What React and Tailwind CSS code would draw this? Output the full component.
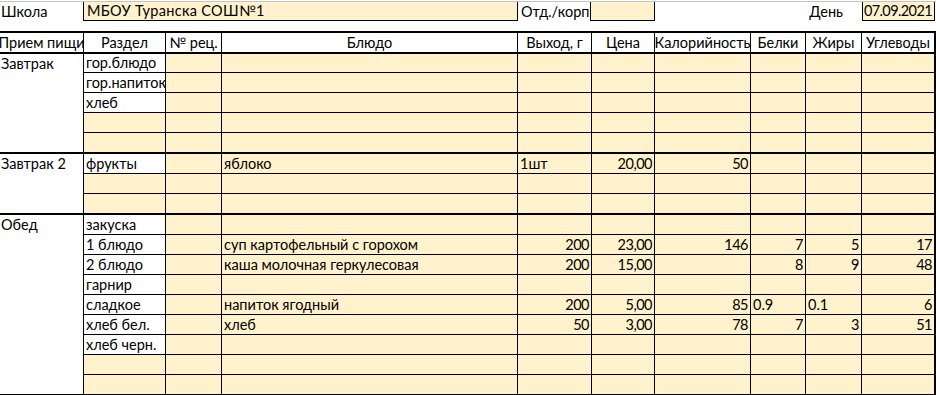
import React from "react";

const C = "bg-[#fff2cc]";
const W = "bg-white";

const colBase = [
  "border-r border-black",
  "border-r border-black",
  "border-r border-black",
  "border-r border-black",
  "border-r border-black",
  "border-r border-black",
  "border-r border-black",
  "border-r border-black",
  "border-r-2 border-black",
];

const groups = [
  {
    name: "Завтрак",
    rows: [
      { h: "h-[19px]", cells: [["гор.блюдо", "l", W]] },
      { h: "h-[20px]", cells: [["гор.напиток", "l", W]] },
      { h: "h-[20px]", cells: [["хлеб", "l", W]] },
      { h: "h-[20px]", cells: [] },
      { h: "h-[19px]", cells: [] },
    ],
  },
  {
    name: "Завтрак 2",
    rows: [
      {
        h: "h-[20px]",
        cells: [
          ["фрукты", "l", W],
          ["", "l"],
          ["яблоко", "l"],
          ["1шт", "l"],
          ["20,00", "r"],
          ["50", "r"],
        ],
      },
      { h: "h-[20px]", cells: [] },
      { h: "h-[19px]", cells: [] },
    ],
  },
  {
    name: "Обед",
    rows: [
      { h: "h-[20px]", cells: [["закуска", "l", W]] },
      {
        h: "h-[20px]",
        cells: [
          ["1 блюдо", "l", W],
          ["", "l"],
          ["суп картофельный с горохом", "l"],
          ["200", "r"],
          ["23,00", "r"],
          ["146", "r"],
          ["7", "r"],
          ["5", "r"],
          ["17", "r"],
        ],
      },
      {
        h: "h-[20px]",
        cells: [
          ["2 блюдо", "l", W],
          ["", "l"],
          ["каша молочная геркулесовая", "l"],
          ["200", "r"],
          ["15,00", "r"],
          ["", "r"],
          ["8", "r"],
          ["9", "r"],
          ["48", "r"],
        ],
      },
      { h: "h-[20px]", cells: [["гарнир", "l", W]] },
      {
        h: "h-[20px]",
        cells: [
          ["сладкое", "l", W],
          ["", "l"],
          ["напиток ягодный", "l"],
          ["200", "r"],
          ["5,00", "r"],
          ["85", "r"],
          ["0.9", "l"],
          ["0.1", "l"],
          ["6", "r"],
        ],
      },
      {
        h: "h-[20px]",
        cells: [
          ["хлеб бел.", "l", W],
          ["", "l"],
          ["хлеб", "l"],
          ["50", "r"],
          ["3,00", "r"],
          ["78", "r"],
          ["7", "r"],
          ["3", "r"],
          ["51", "r"],
        ],
      },
      { h: "h-[20px]", cells: [["хлеб черн.", "l", W]] },
      { h: "h-[20px]", cells: [] },
      { h: "h-[19px]", cells: [] },
    ],
  },
];

function Row({ row, last }) {
  return (
    <div
      className={`grid grid-cols-[82px_56px_296px_74px_63px_96px_55px_56px_74px] ${row.h} ${
        last ? "" : "border-b border-black"
      }`}
    >
      {colBase.map((cls, i) => {
        const cell = row.cells[i];
        const text = cell ? cell[0] : "";
        const align = cell ? cell[1] : "l";
        const bg = cell && cell[2] ? cell[2] : C;
        return (
          <div
            key={i}
            className={`${cls} ${bg} flex items-end pb-[1px] overflow-visible whitespace-nowrap ${
              align === "r"
                ? "justify-end pr-[2px] tracking-[-0.5px]"
                : "justify-start pl-[2px]"
            }`}
          >
            <span className="leading-[17px]">{text}</span>
          </div>
        );
      })}
    </div>
  );
}

function Group({ g }) {
  return (
    <div className="flex border-b-2 border-black">
      <div className="w-[84px] border-r border-black bg-white pl-[1px]">
        <div className="h-[19px] flex items-end pb-[1px]">
          <span className="leading-[17px]">{g.name}</span>
        </div>
      </div>
      <div className="w-[852px] flex flex-col">
        {g.rows.map((r, i) => (
          <Row key={i} row={r} last={i === g.rows.length - 1} />
        ))}
      </div>
    </div>
  );
}

const headers = [
  "Прием пищи",
  "Раздел",
  "№ рец.",
  "Блюдо",
  "Выход, г",
  "Цена",
  "Калорийность",
  "Белки",
  "Жиры",
  "Углеводы",
];

export default function App() {
  return (
    <div className="w-[936px] h-[395px] overflow-hidden bg-white text-black font-['Lato',sans-serif] text-[14.5px]">
      <div className="h-[1px]" />
      <div className="h-[1px] bg-[#c4c4c4]" />
      <div className="flex h-[19px]">
        <div className="w-[83px] flex items-end pb-[1px] pl-[1px]">
          <span className="leading-[17px]">Школа</span>
        </div>
        <div className={`w-[435px] ${C} border-l border-r border-b border-black flex items-end pb-[1px] pl-[3px]`}>
          <span className="leading-[17px] tracking-[0.3px]">МБОУ Туранска СОШ№1</span>
        </div>
        <div className="w-[72px] flex items-end pb-[1px] pl-[3px]">
          <span className="leading-[17px] whitespace-nowrap">Отд./корп</span>
        </div>
        <div className={`w-[65px] ${C} border-l border-r border-b border-black`} />
        <div className="w-[207px] flex items-end justify-end pb-[1px] pr-[19px]">
          <span className="leading-[17px]">День</span>
        </div>
        <div className={`w-[73px] ${C} border-l border-r border-b border-black flex items-end justify-end pb-[1px] pr-[2px]`}>
          <span className="leading-[17px] tracking-[-0.6px] whitespace-nowrap">07.09.2021</span>
        </div>
      </div>
      <div className="h-[10px]" />
      <div className="grid grid-cols-[84px_82px_56px_296px_74px_63px_96px_55px_56px_74px] h-[23px] border-t-2 border-b-2 border-black bg-white">
        {headers.map((h, i) => (
          <div
            key={i}
            className={`${i === 9 ? "border-r-2" : "border-r"} border-black flex items-end justify-center pb-[1px] whitespace-nowrap overflow-visible`}
          >
            <span className="leading-[17px]">{h}</span>
          </div>
        ))}
      </div>
      {groups.map((g, i) => (
        <Group key={i} g={g} />
      ))}
    </div>
  );
}
